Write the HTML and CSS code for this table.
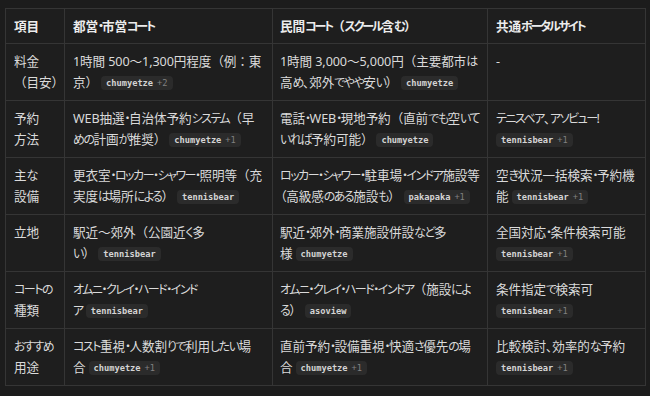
FILE: index.html
```html
<!DOCTYPE html>
<html lang="ja">
<head>
<meta charset="utf-8">
<link rel="stylesheet" href="styles.css">
</head>
<body>
<div class="wrap">
<table class="cmp">
  <colgroup>
    <col class="c1"><col class="c2"><col class="c3"><col class="c4">
  </colgroup>
  <thead>
    <tr>
      <th>項目</th>
      <th>都営<span class="k">・</span>市営<span class="k">コート</span></th>
      <th>民間<span class="k">コート</span><span class="fw">（</span><span class="k">スクール</span>含<span class="k">む</span><span class="fw">）</span></th>
      <th>共通<span class="k">ポータルサイト</span></th>
    </tr>
  </thead>
  <tbody>
    <tr>
      <td>料金<br><span class="fw">（</span>目安<span class="fw">）</span></td>
      <td>1時間 500〜1,300円程度<span class="fw">（</span>例<span class="fw">：</span>東<br>京<span class="fw">）</span><span class="chip">chumyetze<span class="more">+2</span></span></td>
      <td>1時間 3,000〜5,000円<span class="fw">（</span>主要都市<span class="k">は</span><br>高<span class="k">め</span>、郊外<span class="k">でやや</span>安<span class="k">い</span><span class="fw">）</span><span class="chip">chumyetze</span></td>
      <td>-</td>
    </tr>
    <tr>
      <td>予約<br>方法</td>
      <td>WEB抽選<span class="k">・</span>自治体予約<span class="k">システム</span><span class="fw">（</span>早<br><span class="k">めの</span>計画<span class="k">が</span>推奨<span class="fw">）</span><span class="chip">chumyetze<span class="more">+1</span></span></td>
      <td>電話<span class="k">・</span>WEB<span class="k">・</span>現地予約<span class="fw">（</span>直前<span class="k">でも</span>空<span class="k">いて</span><br><span class="k">いれば</span>予約可能<span class="fw">）</span><span class="chip">chumyetze</span></td>
      <td><span class="k">テニスベア</span>、<span class="k">アソビュー</span>!<br><span class="chip first">tennisbear<span class="more">+1</span></span></td>
    </tr>
    <tr>
      <td>主<span class="k">な</span><br>設備</td>
      <td>更衣室<span class="k">・ロッカー・シャワー・</span>照明等<span class="fw">（</span>充<br>実度<span class="k">は</span>場所<span class="k">による</span><span class="fw">）</span><span class="chip">tennisbear</span></td>
      <td><span class="k">ロッカー・シャワー・</span>駐車場<span class="k">・インドア</span>施設等<br>（高級感<span class="k">のある</span>施設<span class="k">も</span><span class="fw">）</span><span class="chip">pakapaka<span class="more">+1</span></span></td>
      <td>空<span class="k">き</span>状況一括検索<span class="k">・</span>予約機<br>能<span class="chip">tennisbear<span class="more">+1</span></span></td>
    </tr>
    <tr>
      <td>立地</td>
      <td>駅近〜郊外<span class="fw">（</span>公園近<span class="k">く</span>多<br><span class="k">い</span><span class="fw">）</span><span class="chip">tennisbear</span></td>
      <td>駅近<span class="k">・</span>郊外<span class="k">・</span>商業施設併設<span class="k">など</span>多<br>様<span class="chip">chumyetze</span></td>
      <td>全国対応<span class="k">・</span>条件検索可能<br><span class="chip first">tennisbear<span class="more">+1</span></span></td>
    </tr>
    <tr>
      <td><span class="k">コートの</span><br>種類</td>
      <td><span class="k">オムニ・クレイ・ハード・インド</span><br><span class="k">ア</span><span class="chip">tennisbear</span></td>
      <td><span class="k">オムニ・クレイ・ハード・インドア</span><span class="fw">（</span>施設<span class="k">によ</span><br><span class="k">る</span><span class="fw">）</span><span class="chip">asoview</span></td>
      <td>条件指定<span class="k">で</span>検索可<br><span class="chip first">tennisbear<span class="more">+1</span></span></td>
    </tr>
    <tr>
      <td><span class="k">おすすめ</span><br>用途</td>
      <td><span class="k">コスト</span>重視<span class="k">・</span>人数割<span class="k">りで</span>利用<span class="k">したい</span>場<br>合<span class="chip">chumyetze<span class="more">+1</span></span></td>
      <td>直前予約<span class="k">・</span>設備重視<span class="k">・</span>快適<span class="k">さ</span>優先<span class="k">の</span>場<br>合<span class="chip">chumyetze<span class="more">+1</span></span></td>
      <td>比較検討、効率的<span class="k">な</span>予約<br><span class="chip first">tennisbear<span class="more">+1</span></span></td>
    </tr>
  </tbody>
</table>
</div>
</body>
</html>
```

FILE: styles.css
```css
html, body {
  margin: 0;
  padding: 0;
  background: #1c1c1c;
}
.wrap {
  padding: 8px 5px 0 5px;
}
.cmp {
  width: 641px;
  table-layout: fixed;
  border-collapse: collapse;
  font-family: "Noto Sans", "Noto Sans CJK JP", sans-serif;
  font-size: 12.6px;
  line-height: 21px;
  color: #dadada;
  font-feature-settings: "palt";
  letter-spacing: -0.1px;
  text-spacing-trim: space-all;
  background: #1e1e1e;
}
.c1 { width: 59px; }
.c2 { width: 208px; }
.c3 { width: 215px; }
.c4 { width: 158px; }
.cmp th, .cmp td {
  border: 1px solid #353535;
  text-align: left;
  vertical-align: top;
  padding: 7px 2px 7px 8px;
  white-space: nowrap;
}
.cmp th {
  font-weight: 700;
  color: #ececec;
  padding: 7px 2px 6px 8px;
}
.cmp th:nth-child(3), .cmp td:nth-child(3) {
  padding-left: 7px;
}
.fw {
  font-feature-settings: normal;
}
.k {
  font-size: 12px;
  letter-spacing: -1.5px;
}
.cmp th .k {
  letter-spacing: -2.1px;
}
.chip {
  display: inline-block;
  vertical-align: 1px;
  margin-left: 3px;
  padding: 0 5px;
  height: 14px;
  line-height: 14px;
  border-radius: 4px;
  background: #2b2b2b;
  font-family: "DejaVu Sans Mono", monospace;
  font-weight: 700;
  font-size: 8.7px;
  letter-spacing: 0;
  color: #d4d4d4;
  font-feature-settings: normal;
}
.chip.first {
  margin-left: 0;
}
.more {
  margin-left: 4px;
  font-weight: 400;
  color: #808080;
}
```
